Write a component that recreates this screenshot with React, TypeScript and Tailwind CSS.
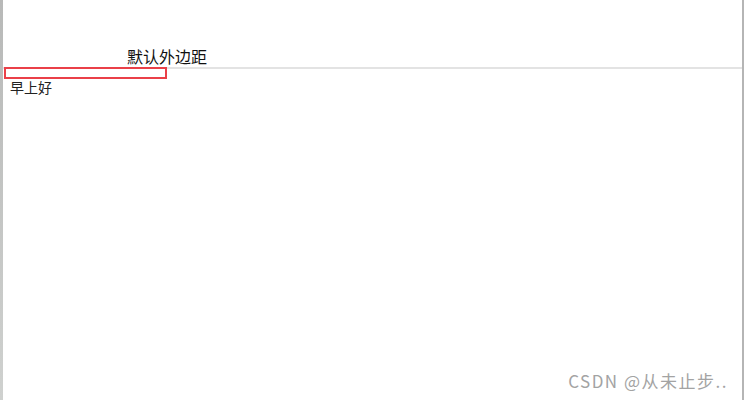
export default function App() {
  return (
    <div className="flex h-[400px] w-[744px] bg-white font-['Microsoft_YaHei','Noto_Sans_CJK_SC',sans-serif] text-[#222]">
      {/* left window edge */}
      <div className="w-[3px] shrink-0 bg-gradient-to-b from-[#b8b9b8] to-[#cfd1cf]" />

      <div className="relative flex flex-1 flex-col">
        {/* header */}
        <div className="flex h-[67px] items-end pb-[1px] pl-[124px]">
          <span className="text-[16px] leading-[20px] text-[#111]">默认外边距</span>
        </div>
        <div className="h-[2px] bg-[#e3e3e3]" />

        {/* red outline box */}
        <div className="-mt-[2px] ml-[1px] h-[12px] w-[163px] border-2 border-[#ea4048]" />

        <div className="pl-[7px] text-[14px] leading-[16px] text-[#222]">早上好</div>

        <div className="mt-auto flex justify-end pb-[7px] pr-[14px]">
          <span className="text-[17px] tracking-[1.5px] text-[#a3a3a3]">CSDN @从未止步..</span>
        </div>
      </div>

      {/* right window edge */}
      <div className="w-[2px] shrink-0 bg-[#b5b5b5]" />
    </div>
  );
}
